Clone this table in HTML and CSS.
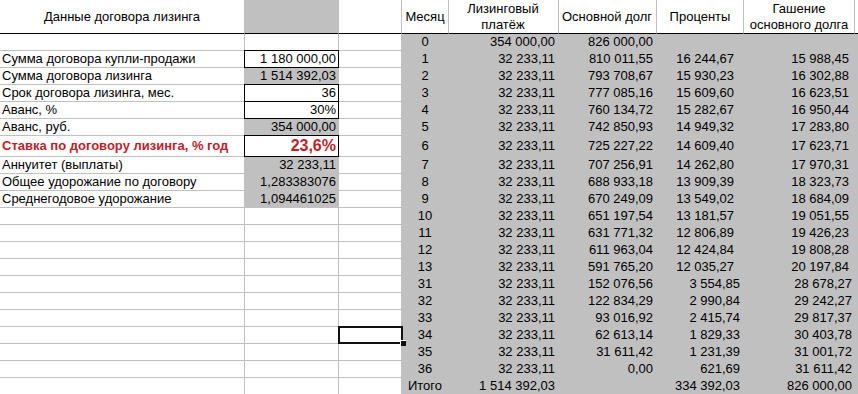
FILE: index.html
```html
<!DOCTYPE html>
<html lang="ru">
<head>
<meta charset="utf-8">
<title>Лизинг</title>
<link rel="stylesheet" href="styles.css">
</head>
<body>
<div class="sheet">
  <div class="row head">
    <div class="c hc">Данные договора лизинга</div>
    <div class="c g"></div>
    <div class="c"></div>
    <div class="c hc">Месяц</div>
    <div class="c hc">Лизинговый<br>платёж</div>
    <div class="c hc">Основной долг</div>
    <div class="c hc">Проценты</div>
    <div class="c hc">Гашение<br>основного долга</div>
    <div class="c"></div>
  </div>

  <div class="row a">
    <div class="c"></div><div class="c"></div><div class="c"></div>
    <div class="c g m">0</div><div class="c g r">354 000,00</div><div class="c g r">826 000,00</div><div class="c g r"></div><div class="c g r"></div><div class="c g"></div>
  </div>
  <div class="row a">
    <div class="c l">Сумма договора купли-продажи</div><div class="c r box">1 180 000,00</div><div class="c"></div>
    <div class="c g m">1</div><div class="c g r">32 233,11</div><div class="c g r">810 011,55</div><div class="c g r">16 244,67</div><div class="c g r">15 988,45</div><div class="c g"></div>
  </div>
  <div class="row a">
    <div class="c l">Сумма договора лизинга</div><div class="c g r">1 514 392,03</div><div class="c"></div>
    <div class="c g m">2</div><div class="c g r">32 233,11</div><div class="c g r">793 708,67</div><div class="c g r">15 930,23</div><div class="c g r">16 302,88</div><div class="c g"></div>
  </div>
  <div class="row a">
    <div class="c l">Срок договора лизинга, мес.</div><div class="c r box">36</div><div class="c"></div>
    <div class="c g m">3</div><div class="c g r">32 233,11</div><div class="c g r">777 085,16</div><div class="c g r">15 609,60</div><div class="c g r">16 623,51</div><div class="c g"></div>
  </div>
  <div class="row a">
    <div class="c l">Аванс, %</div><div class="c r box">30%</div><div class="c"></div>
    <div class="c g m">4</div><div class="c g r">32 233,11</div><div class="c g r">760 134,72</div><div class="c g r">15 282,67</div><div class="c g r">16 950,44</div><div class="c g"></div>
  </div>
  <div class="row a">
    <div class="c l">Аванс, руб.</div><div class="c g r">354 000,00</div><div class="c"></div>
    <div class="c g m">5</div><div class="c g r">32 233,11</div><div class="c g r">742 850,93</div><div class="c g r">14 949,32</div><div class="c g r">17 283,80</div><div class="c g"></div>
  </div>
  <div class="row a tall">
    <div class="c l red">Ставка по договору лизинга, % год</div><div class="c r box red big">23,6%</div><div class="c"></div>
    <div class="c g m">6</div><div class="c g r">32 233,11</div><div class="c g r">725 227,22</div><div class="c g r">14 609,40</div><div class="c g r">17 623,71</div><div class="c g"></div>
  </div>
  <div class="row a">
    <div class="c l">Аннуитет (выплаты)</div><div class="c g r">32 233,11</div><div class="c"></div>
    <div class="c g m">7</div><div class="c g r">32 233,11</div><div class="c g r">707 256,91</div><div class="c g r">14 262,80</div><div class="c g r">17 970,31</div><div class="c g"></div>
  </div>
  <div class="row a">
    <div class="c l">Общее удорожание по договору</div><div class="c g r">1,283383076</div><div class="c"></div>
    <div class="c g m">8</div><div class="c g r">32 233,11</div><div class="c g r">688 933,18</div><div class="c g r">13 909,39</div><div class="c g r">18 323,73</div><div class="c g"></div>
  </div>
  <div class="row a">
    <div class="c l">Среднегодовое удорожание</div><div class="c g r">1,094461025</div><div class="c"></div>
    <div class="c g m">9</div><div class="c g r">32 233,11</div><div class="c g r">670 249,09</div><div class="c g r">13 549,02</div><div class="c g r">18 684,09</div><div class="c g"></div>
  </div>
  <div class="row a">
    <div class="c"></div><div class="c"></div><div class="c"></div>
    <div class="c g m">10</div><div class="c g r">32 233,11</div><div class="c g r">651 197,54</div><div class="c g r">13 181,57</div><div class="c g r">19 051,55</div><div class="c g"></div>
  </div>
  <div class="row a">
    <div class="c"></div><div class="c"></div><div class="c"></div>
    <div class="c g m">11</div><div class="c g r">32 233,11</div><div class="c g r">631 771,32</div><div class="c g r">12 806,89</div><div class="c g r">19 426,23</div><div class="c g"></div>
  </div>
  <div class="row a">
    <div class="c"></div><div class="c"></div><div class="c"></div>
    <div class="c g m">12</div><div class="c g r">32 233,11</div><div class="c g r">611 963,04</div><div class="c g r">12 424,84</div><div class="c g r">19 808,28</div><div class="c g"></div>
  </div>
  <div class="row a">
    <div class="c"></div><div class="c"></div><div class="c"></div>
    <div class="c g m">13</div><div class="c g r">32 233,11</div><div class="c g r">591 765,20</div><div class="c g r">12 035,27</div><div class="c g r">20 197,84</div><div class="c g"></div>
  </div>
  <div class="row b">
    <div class="c"></div><div class="c"></div><div class="c"></div>
    <div class="c g m">31</div><div class="c g r">32 233,11</div><div class="c g r">152 076,56</div><div class="c g r">3 554,85</div><div class="c g r">28 678,27</div><div class="c g"></div>
  </div>
  <div class="row b">
    <div class="c"></div><div class="c"></div><div class="c"></div>
    <div class="c g m">32</div><div class="c g r">32 233,11</div><div class="c g r">122 834,29</div><div class="c g r">2 990,84</div><div class="c g r">29 242,27</div><div class="c g"></div>
  </div>
  <div class="row b">
    <div class="c"></div><div class="c"></div><div class="c"></div>
    <div class="c g m">33</div><div class="c g r">32 233,11</div><div class="c g r">93 016,92</div><div class="c g r">2 415,74</div><div class="c g r">29 817,37</div><div class="c g"></div>
  </div>
  <div class="row b">
    <div class="c"></div><div class="c"></div><div class="c sel"><span class="handle"></span></div>
    <div class="c g m">34</div><div class="c g r">32 233,11</div><div class="c g r">62 613,14</div><div class="c g r">1 829,33</div><div class="c g r">30 403,78</div><div class="c g"></div>
  </div>
  <div class="row b">
    <div class="c"></div><div class="c"></div><div class="c"></div>
    <div class="c g m">35</div><div class="c g r">32 233,11</div><div class="c g r">31 611,42</div><div class="c g r">1 231,39</div><div class="c g r">31 001,72</div><div class="c g"></div>
  </div>
  <div class="row b">
    <div class="c"></div><div class="c"></div><div class="c"></div>
    <div class="c g m">36</div><div class="c g r">32 233,11</div><div class="c g r">0,00</div><div class="c g r">621,69</div><div class="c g r">31 611,42</div><div class="c g"></div>
  </div>
  <div class="row b">
    <div class="c"></div><div class="c"></div><div class="c"></div>
    <div class="c g m">Итого</div><div class="c g r">1 514 392,03</div><div class="c g r"></div><div class="c g r">334 392,03</div><div class="c g r">826 000,00</div><div class="c g"></div>
  </div>
</div>
</body>
</html>
```

FILE: styles.css
```css
html, body {
  margin: 0;
  padding: 0;
  background: #fff;
}

body {
  font-family: "Liberation Sans", Arial, sans-serif;
  font-size: 13px;
  color: #000;
  overflow: hidden;
}

.sheet {
  width: 858px;
}

.row {
  display: grid;
  grid-template-columns: 245px 94px 63px 47px 110px 98px 87px 111px 1fr;
  height: 17px;
}

.row.tall {
  height: 21px;
}

.row.head {
  height: 34px;
}

.c {
  box-sizing: border-box;
  border-right: 1px solid #c0c0c0;
  border-bottom: 1px solid #c0c0c0;
  line-height: 16px;
  white-space: nowrap;
  padding: 0 2px;
  display: flex;
  align-items: center;
  position: relative;
  min-width: 0;
}

.head .c {
  border-bottom-color: #000;
}

.hc {
  justify-content: center;
  text-align: center;
  line-height: 16px;
}

.g {
  background: #c0c0c0;
}

.l {
  justify-content: flex-start;
  padding-left: 2px;
}

.r {
  justify-content: flex-end;
}

.m {
  justify-content: center;
  overflow: visible;
}

/* column-specific right padding */
.row .c:nth-child(5) { padding-right: 3px; }
.row .c:nth-child(6) { padding-right: 3px; }
.row.a .c:nth-child(7) { padding-right: 9px; }
.row.b .c:nth-child(7) { padding-right: 3px; }
.row.a .c:nth-child(8) { padding-right: 5px; }
.row.b .c:nth-child(8) { padding-right: 2px; }

.red {
  color: #c01e28;
  font-weight: bold;
}

.big {
  font-size: 16px;
}

.box::after {
  content: "";
  position: absolute;
  left: -1px;
  top: -1px;
  right: -1px;
  bottom: -1px;
  border: 1px solid #000;
  pointer-events: none;
}

.sel {
  z-index: 2;
}

.sel::after {
  content: "";
  position: absolute;
  left: -1px;
  top: -1px;
  right: -2px;
  bottom: -1px;
  border: 2px solid #111;
}

.handle {
  position: absolute;
  right: -5px;
  bottom: -3px;
  width: 5px;
  height: 5px;
  background: #111;
  border: 1px solid #fff;
  border-right: none;
  border-bottom: none;
  z-index: 3;
}
```
